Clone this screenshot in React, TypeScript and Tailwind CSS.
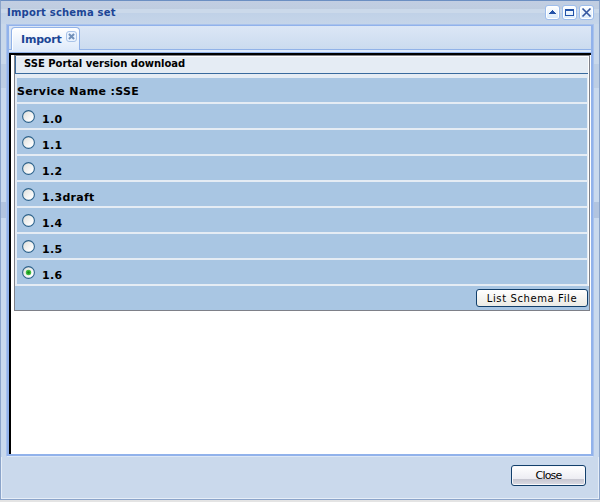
import React from 'react';

const versions = ['1.0', '1.1', '1.2', '1.3draft', '1.4', '1.5', '1.6'];

function ToolButton({ children }: { children: React.ReactNode }) {
  return (
    <span className="flex h-[15px] w-[15px] items-center justify-center rounded-[3px] border border-[#9dbdec] bg-linear-to-b from-white to-[#d9eafb] shadow-[inset_0_0_0_1px_#ffffff]">
      <svg width="13" height="13" viewBox="0 0 13 13" shapeRendering="crispEdges" className="shrink-0">
        {children}
      </svg>
    </span>
  );
}

function Radio({ checked }: { checked: boolean }) {
  return (
    <svg width="13" height="13" viewBox="0 0 13 13" className="mt-[6px] ml-[5px] shrink-0">
      <defs>
        <linearGradient id="radioFill" x1="0" y1="0" x2="1" y2="1">
          <stop offset="0" stopColor="#dcdcd7" />
          <stop offset="0.8" stopColor="#ffffff" />
        </linearGradient>
      </defs>
      <circle cx="6.5" cy="6.5" r="5.9" fill="url(#radioFill)" stroke="#2c628b" strokeWidth="1.1" />
      {checked && <circle cx="6.5" cy="6.5" r="2.7" fill="#3fbd3f" />}
      {checked && <circle cx="6.5" cy="6.5" r="1.3" fill="#168c16" />}
    </svg>
  );
}

export default function App() {
  return (
    <div className="flex h-[502px] w-[600px] flex-col overflow-hidden bg-[#e4e4e4] font-['DejaVu_Sans',sans-serif]">
      <div className="flex h-[500px] w-[600px] shrink-0 flex-col border border-[#8ba4ca] border-t-[#6c8fc2] bg-[#cad9ec]">
        <div className="flex h-[23px] shrink-0 justify-between bg-[linear-gradient(#c2cee2_0px,#bfcde0_8px,#cbd9ea_8px,#cbd9ea_12px,#c0d1e7_12px,#c5d5e9_23px)] pl-[6px] pr-[5px]">
          <div className="mt-[4px] text-[10px] leading-[15px] font-bold tracking-[0.2px] whitespace-nowrap text-[#1c4595]">
            Import schema set
          </div>
          <div className="mt-[4px] flex gap-[2px]">
            <ToolButton>
              <path d="M6 4h1v1h1v1h1v1h1v1H3V7h1V6h1V5h1z" fill="#2453a8" />
            </ToolButton>
            <ToolButton>
              <path d="M2 3h9v7H2zM3 5v4h7V5z" fill="#2453a8" fillRule="evenodd" />
            </ToolButton>
            <ToolButton>
              <path d="M2.5 2.5l8 8M10.5 2.5l-8 8" stroke="#3456a0" strokeWidth="1.7" shapeRendering="auto" />
            </ToolButton>
          </div>
        </div>
        <div className="flex h-[433px] shrink-0 bg-[linear-gradient(#c9d8ea_0px,#c9d8ea_40px,#bdcee4_40px,#bdcee4_64px,#c9d9ed_64px,#c9d9ed_178px,#b2c4df_178px,#b2c4df_194px,#c9d9ed_194px)] px-[5px]">
          <div className="flex w-[588px] flex-col border border-[#a9c2ec] border-b-[#dde8f7]">
            <div className="flex h-[431px] flex-col border-x-2 border-t border-b-2 border-[#91b2eb]">
              <div className="flex h-[24px] shrink-0 items-end border-b border-[#91b2e8] bg-linear-to-b from-[#dce7f6] to-[#cbdbef] pl-[2px]">
                <div className="-mb-px flex h-[23px] w-[69px] rounded-t-[4px] border border-b-0 border-[#91b2e8] bg-linear-to-b from-white to-[#deeafa] shadow-[inset_1px_1px_0_#ffffff]">
                  <span className="ml-[9px] mt-[5px] w-[45px] text-[11px] leading-[14px] font-bold tracking-[-0.2px] text-[#1c4595]">Import</span>
                  <span className="mt-[3px] flex h-[11px] w-[11px] shrink-0 items-center justify-center rounded-[3px] border border-[#a9c3e8] bg-[#eaf3ff]">
                    <svg width="7" height="7" viewBox="0 0 6 6" className="shrink-0">
                      <path d="M.8.8l4.4 4.4M5.2.8L.8 5.2" stroke="#7190b9" strokeWidth="1.7" />
                    </svg>
                  </span>
                </div>
              </div>
              <div className="h-[3px] shrink-0 border-b border-[#91b2e8] bg-[#deeafa]" />
              <div className="flex flex-1 flex-col border-l-2 border-t-2 border-black bg-white pl-[3px]">
                <div className="flex h-[256px] w-[576px] shrink-0 flex-col border border-[#7e8088] bg-[#e5ecf4] shadow-[inset_-1px_1px_0_#ffffff]">
                  <div className="mr-px h-[18px] shrink-0 border-b border-l border-[#396a9d] pl-[8px] text-[10px] leading-[16px] font-bold tracking-[-0.01px] text-black">
                    SSE Portal version download
                  </div>
                  <div className="mt-[4px] flex shrink-0 flex-col gap-[2px] pr-[2px] pl-[2px]">
                    <div className="h-[24px] bg-[#a9c6e3] text-[11px] leading-[27px] font-bold tracking-[0.35px] text-black">Service Name :SSE</div>
                    {versions.map((v) => (
                      <label key={v} className="flex h-[24px] bg-[#a9c6e3]">
                        <Radio checked={v === '1.6'} />
                        <span className="ml-[7px] text-[11px] leading-[31px] font-bold tracking-[0.3px] text-black">{v}</span>
                      </label>
                    ))}
                  </div>
                  <div className="mt-[2px] flex flex-1 justify-end bg-[#a9c6e3] pr-px pt-[3px]">
                    <button className="h-[18px] w-[112px] rounded-[3px] border border-[#123f6b] bg-linear-to-b from-white to-[#ecebe5] text-[10px] leading-[17px] tracking-[0.6px] text-black">
                      List Schema File
                    </button>
                  </div>
                </div>
              </div>
            </div>
          </div>
        </div>
        <div className="flex flex-1 justify-end border-b border-l border-r border-[#e6eef8] pr-[12px] pt-[8px]">
          <button className="h-[21px] w-[75px] rounded-[3px] border border-[#123f6b] bg-[linear-gradient(#ffffff,#ececf2_70%,#c8c8d2_71%,#dcdce4)] text-[11px] leading-[20px] tracking-[-0.8px] text-black shadow-[inset_0_0_0_1px_#f8f8fb]">
            Close
          </button>
        </div>
      </div>
    </div>
  );
}
